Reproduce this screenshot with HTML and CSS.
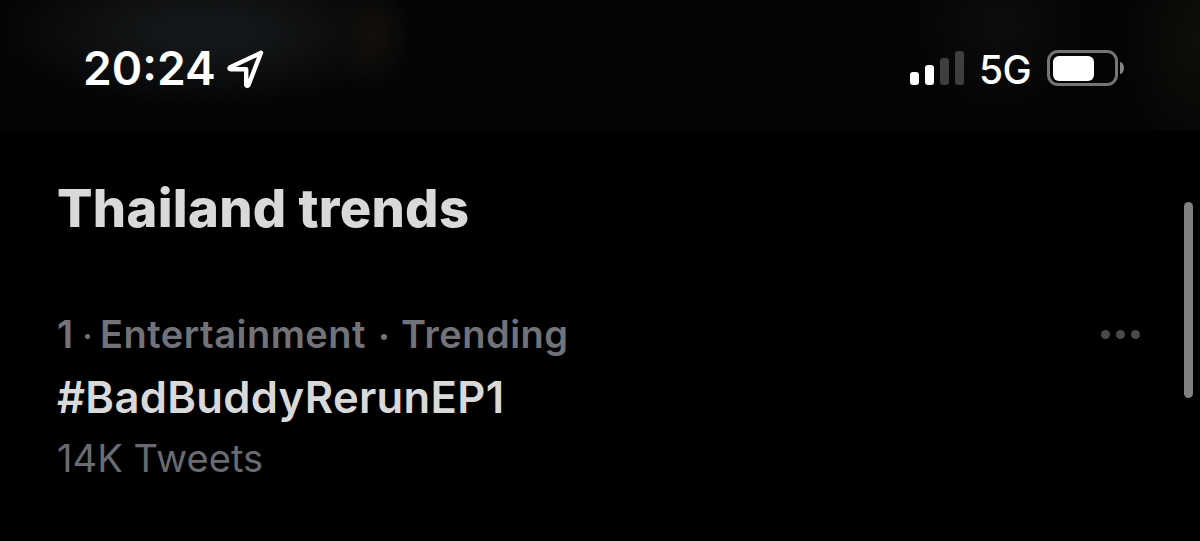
FILE: index.html
```html
<!DOCTYPE html>
<html lang="en">
<head>
  <meta charset="UTF-8" />
  <meta name="viewport" content="width=device-width, initial-scale=1.0"/>
  <title>Thailand trends</title>
  <link rel="stylesheet" href="styles.css">
</head>
<body>

  <header class="status-bar">
    <div class="status-left">
      <span class="time">20:24</span>
      <svg class="location" width="40" height="40" viewBox="0 0 40 40">
        <path d="M35 3.8 L4.2 18.2 Q2.4 19.9 4.8 20.2 H20.2 V36 Q21 37.6 22.4 36.2 Z"/>
      </svg>
    </div>
    <div class="status-right">
      <div class="signal">
        <span class="bar bar-1"></span>
        <span class="bar bar-2"></span>
        <span class="bar bar-3 off"></span>
        <span class="bar bar-4 off"></span>
      </div>
      <span class="network">5G</span>
      <div class="battery">
        <div class="battery-body"><div class="battery-level"></div></div>
        <div class="battery-cap"></div>
      </div>
    </div>
  </header>

  <main class="trends">
    <h1>Thailand trends</h1>
    <div class="trend">
      <div class="trend-info">
        <div class="meta">
          <span class="rank">1</span>
          <span class="dot small"></span>
          <span class="category">Entertainment</span>
          <span class="dot"></span>
          <span class="label">Trending</span>
        </div>
        <div class="hashtag">#BadBuddyRerunEP1</div>
        <div class="count">14K Tweets</div>
      </div>
      <div class="more"><span></span><span></span><span></span></div>
    </div>
  </main>

  <div class="scrollbar"></div>

</body>
</html>
```
FILE: styles.css
```css
body {
  margin: 0;
  height: 541px;
  overflow: hidden;
  background: #000;
  color: #d9d9d9;
  font-family: Inter, 'Liberation Sans', sans-serif;
}

.status-bar {
  box-sizing: border-box;
  height: 131px;
  padding: 40px 76px 0 83px;
  display: flex;
  justify-content: space-between;
  align-items: flex-start;
  color: #fff;
  background:
    radial-gradient(ellipse 40px 60px at 372px 35px, #130f0a, transparent),
    radial-gradient(ellipse 210px 75px at 205px 32px, #141719 20%, transparent),
    radial-gradient(ellipse 90px 90px at 1000px 25px, #0d0d10, transparent),
    radial-gradient(ellipse 80px 130px at 1200px 40px, #100e08, transparent),
    #040405;
}

.status-left {
  display: flex;
}

.time {
  width: 143px;
  font-size: 46.2px;
  font-weight: 600;
  line-height: 57px;
}

.location {
  margin-top: 9px;
}

.location path {
  fill: none;
  stroke: #fff;
  stroke-width: 4.4;
  stroke-linejoin: round;
}

.status-right {
  display: flex;
}

.signal {
  display: flex;
  align-items: flex-end;
  gap: 6px;
  height: 45px;
}

.bar {
  width: 9px;
  border-radius: 3px;
  background: #fff;
}

.bar-1 { height: 13px; }
.bar-2 { height: 20px; }
.bar-3 { height: 27px; }
.bar-4 { height: 34px; }

.bar.off {
  background: #3e3e40;
}

.network {
  width: 68px;
  margin-left: 15px;
  font-size: 39px;
  font-weight: 500;
  line-height: 60px;
  letter-spacing: -0.5px;
}

.battery {
  display: flex;
  align-items: center;
  gap: 2px;
  height: 36px;
  margin-top: 10px;
}

.battery-body {
  box-sizing: border-box;
  width: 71px;
  height: 36px;
  padding: 3px;
  border: 3px solid #737576;
  border-radius: 11px;
}

.battery-level {
  width: 41px;
  height: 25px;
  border-radius: 6px;
  background: #fff;
}

.battery-cap {
  width: 4px;
  height: 12px;
  border-radius: 0 4px 4px 0 / 0 6px 6px 0;
  background: #858687;
}

.trends {
  padding: 47px 60px 0 57px;
}

h1 {
  margin: 0;
  font-size: 52.5px;
  font-weight: 800;
  line-height: 60px;
  letter-spacing: 0.3px;
}

.trend {
  display: flex;
  justify-content: space-between;
  padding-top: 72px;
}

.meta {
  display: flex;
  align-items: center;
  height: 48px;
  color: #717378;
  font-size: 38px;
  font-weight: 600;
  line-height: 48px;
  letter-spacing: 0.5px;
}

.rank {
  width: 28px;
}

.dot {
  width: 6px;
  height: 6px;
  margin: 5px 14px 0 15px;
  border-radius: 50%;
  background: #717378;
}

.dot.small {
  width: 5px;
  height: 5px;
  margin: 5px 10px 0 0;
}

.hashtag {
  margin-top: 12px;
  font-size: 43.6px;
  font-weight: 600;
  line-height: 56px;
  letter-spacing: 0.3px;
}

.count {
  margin-top: 8px;
  color: #696b70;
  font-size: 38px;
  line-height: 48px;
  letter-spacing: 0.1px;
}

.more {
  display: flex;
  gap: 6px;
  margin-top: 20px;
}

.more span {
  width: 9px;
  height: 9px;
  border-radius: 50%;
  background: #4a4a4d;
}

.scrollbar {
  position: absolute;
  top: 202px;
  right: 7px;
  width: 9px;
  height: 196px;
  border-radius: 5px;
  background: #808080;
}
```
